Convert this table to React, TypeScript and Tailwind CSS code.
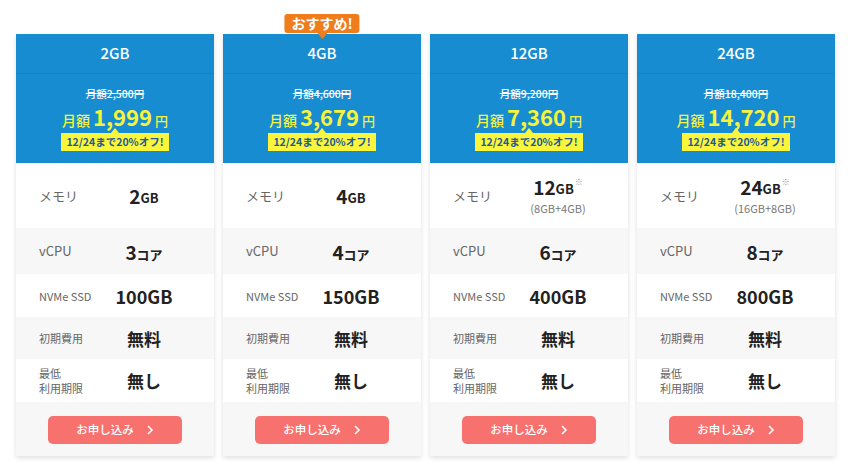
import React from "react";

type Plan = {
  name: string;
  old: string;
  price: string;
  mem: string;
  memNote?: string;
  cpu: string;
  ssd: string;
  recommend?: boolean;
};

const plans: Plan[] = [
  { name: "2GB", old: "2,500", price: "1,999", mem: "2", cpu: "3", ssd: "100GB" },
  { name: "4GB", old: "4,600", price: "3,679", mem: "4", cpu: "4", ssd: "150GB", recommend: true },
  { name: "12GB", old: "9,200", price: "7,360", mem: "12", memNote: "(8GB+4GB)", cpu: "6", ssd: "400GB" },
  { name: "24GB", old: "18,400", price: "14,720", mem: "24", memNote: "(16GB+8GB)", cpu: "8", ssd: "800GB" },
];

const font = { fontFamily: '"Noto Sans CJK JP", "Noto Sans", sans-serif' };

function Row({
  label,
  children,
  className,
  labelClass,
}: {
  label: React.ReactNode;
  children: React.ReactNode;
  className: string;
  labelClass: string;
}) {
  return (
    <div className={`flex items-center pl-[23px] pr-[32px] ${className}`}>
      <div className={`w-[67px] shrink-0 text-[#666] ${labelClass}`}>{label}</div>
      <div className="flex-1 flex flex-col items-center text-[#222]">{children}</div>
    </div>
  );
}

function Card({ p }: { p: Plan }) {
  return (
    <div className="relative w-[198px] shrink-0 bg-white shadow-[0_2px_5px_rgba(0,0,0,0.13)]">
      {p.recommend && (
        <div className="absolute left-1/2 -translate-x-1/2 top-[-20px] flex flex-col items-center">
          <div className="bg-[#f07d1c] text-white font-bold text-[14px] leading-[19px] px-[7px] rounded-[3px] whitespace-nowrap">
            おすすめ!
          </div>
          <div className="w-0 h-0 border-l-[5px] border-r-[5px] border-t-[6px] border-l-transparent border-r-transparent border-t-[#f07d1c]" />
        </div>
      )}
      <div className="bg-[#188cd0]">
        <div className="h-[40px] flex items-center justify-center text-white text-[15px] font-medium border-b border-[#1584c6]">
          {p.name}
        </div>
        <div className="h-[89px] flex flex-col items-center pt-[13px]">
          <div className="text-[10.5px] leading-[14px] text-white line-through decoration-white font-medium">
            月額{p.old}円
          </div>
          <div className="flex items-baseline text-[#f5f33c] leading-none mt-[4px]">
            <span className="text-[14px] font-medium">月額</span>
            <span className="text-[22px] font-bold mx-[3px]">{p.price}</span>
            <span className="text-[13px] font-medium">円</span>
          </div>
          <div className="relative mt-[6px]">
            <div className="absolute left-1/2 -translate-x-1/2 top-[-5px] w-0 h-0 border-l-[4px] border-r-[4px] border-b-[5px] border-l-transparent border-r-transparent border-b-[#fbf53b]" />
            <div className="bg-[#fbf53b] text-[#1b5c98] font-bold text-[10.5px] leading-[18px] px-[5px] whitespace-nowrap">
              12/24まで20%オフ!
            </div>
          </div>
        </div>
      </div>
      <Row label="メモリ" className="h-[65px]" labelClass="text-[13px] leading-[18px]">
        <div className="font-bold leading-none flex items-start">
          <span className="text-[19px]">{p.mem}</span>
          <span className="text-[13px] mt-[5px]">GB</span>
          {p.memNote && <span className="text-[8px] text-[#999] ml-[1px] mt-[1px]">※</span>}
        </div>
        {p.memNote && <div className="text-[11px] text-[#777] mt-[7px] leading-none">{p.memNote}</div>}
      </Row>
      <Row label="vCPU" className="h-[46px] bg-[#f7f7f7]" labelClass="text-[13px] leading-[18px]">
        <div className="font-bold leading-none flex items-baseline">
          <span className="text-[19px]">{p.cpu}</span>
          <span className="text-[13px]">コア</span>
        </div>
      </Row>
      <Row label="NVMe SSD" className="h-[43px]" labelClass="text-[11px] leading-[16px]">
        <div className="font-bold text-[18px] leading-none">{p.ssd}</div>
      </Row>
      <Row label="初期費用" className="h-[42px] bg-[#f7f7f7]" labelClass="text-[11px] leading-[16px]">
        <div className="font-bold text-[17px] leading-none">無料</div>
      </Row>
      <Row
        label={
          <div className="flex flex-col">
            <span className="leading-[15px]">最低</span>
            <span className="leading-[15px]">利用期限</span>
          </div>
        }
        className="h-[43px]"
        labelClass="text-[11px]"
      >
        <div className="font-bold text-[17px] leading-none">無し</div>
      </Row>
      <div className="h-[54px] bg-[#f7f7f7] flex items-center justify-center pt-[1px]">
        <div className="w-[134px] h-[28px] rounded-[5px] bg-[#f7716f] flex items-center justify-center text-white text-[11.5px] font-medium">
          <span>お申し込み</span>
          <svg width="8" height="10" viewBox="0 0 8 10" className="ml-[12px]">
            <path d="M2 1 L6 5 L2 9" fill="none" stroke="white" strokeWidth="1.6" />
          </svg>
        </div>
      </div>
    </div>
  );
}

export default function App() {
  return (
    <div className="w-[850px] h-[476px] bg-white overflow-hidden" style={font}>
      <div className="flex gap-[9px] pl-[16px] pt-[34px]">
        {plans.map((p) => (
          <Card key={p.name} p={p} />
        ))}
      </div>
    </div>
  );
}
